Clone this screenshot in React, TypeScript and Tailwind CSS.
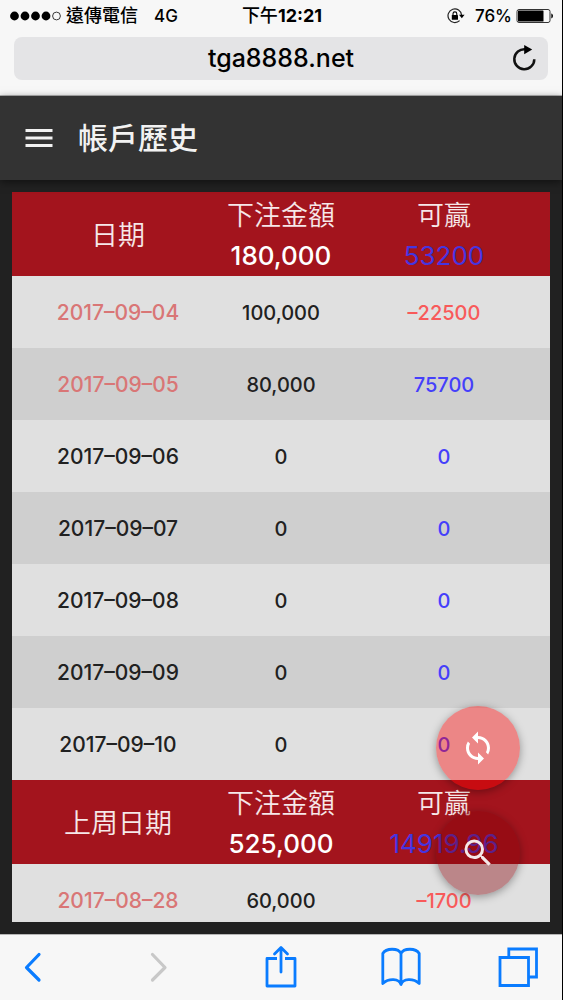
import React from "react";
import { MdLoop, MdMenu, MdSearch } from "react-icons/md";

type Row = { date: string; amount: string; win: string; marked?: boolean };
type Group = { title: string; total: string; win: string; rows: Row[] };

const groups: Group[] = [
  {
    title: "日期",
    total: "180,000",
    win: "53200",
    rows: [
      { date: "2017–09–04", amount: "100,000", win: "–22500", marked: true },
      { date: "2017–09–05", amount: "80,000", win: "75700", marked: true },
      { date: "2017–09–06", amount: "0", win: "0" },
      { date: "2017–09–07", amount: "0", win: "0" },
      { date: "2017–09–08", amount: "0", win: "0" },
      { date: "2017–09–09", amount: "0", win: "0" },
      { date: "2017–09–10", amount: "0", win: "0" },
    ],
  },
  {
    title: "上周日期",
    total: "525,000",
    win: "14919.96",
    rows: [{ date: "2017–08–28", amount: "60,000", win: "–1700", marked: true }],
  },
];

function StatusBar() {
  return (
    <div className="grid h-8 grid-cols-3 items-center pr-2 pl-2.5 text-[17px] leading-8 font-medium">
      <div className="flex items-center whitespace-nowrap">
        <svg className="mr-1 h-3 w-[52px]" viewBox="0 0 52 12" aria-hidden="true">
          <circle cx="4.5" cy="6" r="4.4" />
          <circle cx="15" cy="6" r="4.4" />
          <circle cx="25.5" cy="6" r="4.4" />
          <circle cx="36" cy="6" r="4.4" />
          <circle cx="46.5" cy="6" r="3.9" fill="none" stroke="#222" strokeWidth="0.9" />
        </svg>
        <span className="text-[18px]">遠傳電信</span>
        <span className="ml-4">4G</span>
      </div>
      <div className="text-center text-[18px] whitespace-nowrap">
        下午<span className="font-bold">12:21</span>
      </div>
      <div className="flex items-center justify-end">
        <svg className="mr-2.5 h-4 w-[18px]" viewBox="0 0 18 16" aria-hidden="true">
          <path d="M14.6 7.2A6.8 6.8 0 1 0 12.6 12.6" fill="none" stroke="#222" strokeWidth="1.2" />
          <path d="M12 6.8h5.6l-2.8 3.4z" />
          <rect x="4.8" y="7" width="6.2" height="4.8" rx="0.6" />
          <path d="M6 7.2V5.8a1.9 1.9 0 0 1 3.8 0v1.4" fill="none" stroke="#000" strokeWidth="1.1" />
        </svg>
        <span>76%</span>
        <svg className="ml-1 h-4 w-[38px]" viewBox="0 0 38 16" aria-hidden="true">
          <rect x="1" y="1.5" width="33" height="13" rx="2" fill="none" stroke="#333" strokeWidth="1" />
          <rect x="2" y="2.5" width="25.5" height="11" rx="0.6" />
          <path d="M35.3 5.6c2.2.6 2.2 4.2 0 4.8z" />
        </svg>
      </div>
    </div>
  );
}

function AddressBar() {
  return (
    <div className="mx-3.5 mt-[5px] mb-[15px] flex h-[43px] items-center rounded-lg bg-[#e4e4e6] px-2">
      <span className="w-8" />
      <span className="flex-1 text-center text-[25px] font-medium">tga8888.net</span>
      <button type="button" aria-label="重新載入" className="flex w-8 justify-center">
        <svg className="h-7 w-7" viewBox="0 0 28 28" aria-hidden="true">
          <path d="M24.3 14.2A10 10 0 1 1 15.4 4.300" fill="none" stroke="#111" strokeWidth="2.500" />
          <path d="M14.2 0v9.200l8-4.700z" />
        </svg>
      </button>
    </div>
  );
}

function HistoryTable() {
  return (
    <table className="w-full table-fixed border-collapse text-center">
      <colgroup>
        <col />
        <col className="w-[114px]" />
        <col />
      </colgroup>
      {groups.map((g) => (
        <tbody key={g.title}>
          <tr className="h-[84px] bg-[#a3141d] text-[27px] leading-10 text-white">
            <th scope="col" className="p-0 pt-1 font-[350] text-white/90">{g.title}</th>
            <th scope="col" className="p-0 pt-1 font-[350] whitespace-nowrap">
              <div className="text-white/90">下注金額</div>
              <div className="text-[26px] font-medium">{g.total}</div>
            </th>
            <th scope="col" className="p-0 pt-1 font-[350]">
              <div className="text-white/90">可贏</div>
              <div className="text-[26px] font-normal text-[#4535e0]">{g.win}</div>
            </th>
          </tr>
          {g.rows.map((r) => (
            <tr
              key={r.date}
              className="h-[72px] text-[20px] font-medium text-[#212121] odd:bg-[#cfcfcf] even:bg-[#e0e0e0]"
            >
              <td className={r.marked ? "p-0 pt-0.5 text-[21px] text-[#d97676]" : "p-0 pt-0.5 text-[21px]"}>{r.date}</td>
              <td className="p-0 pt-0.5">{r.amount}</td>
              <td className={r.win.startsWith("–") ? "p-0 pt-0.5 text-[#f85a5a]" : "p-0 pt-0.5 text-[#453ffb]"}>{r.win}</td>
            </tr>
          ))}
        </tbody>
      ))}
    </table>
  );
}

function BrowserToolbar() {
  const line = { fill: "none", stroke: "currentColor" } as const;
  return (
    <nav className="flex h-[66px] shrink-0 items-center justify-between border-t border-[#b5b5b5] bg-[#f7f7f7] px-6 pb-0.5 text-[#0a7cff]">
      <button type="button" aria-label="上一頁" className="flex w-11">
        <svg className="h-8 w-[18px]" viewBox="0 0 18 32" {...line} strokeWidth="3.2" strokeLinecap="round" strokeLinejoin="round">
          <path d="M15 3.5L2.500 16.500l12.500 12.500" />
        </svg>
      </button>
      <button type="button" aria-label="下一頁" className="flex w-11 pl-2 text-[#c8c8c8]">
        <svg className="h-8 w-[18px]" viewBox="0 0 18 32" {...line} strokeWidth="3.2" strokeLinecap="round" strokeLinejoin="round">
          <path d="M2.500 3.500L15 16.500 2.500 29" />
        </svg>
      </button>
      <button type="button" aria-label="分享" className="flex w-11 justify-center">
        <svg className="h-11 w-8" viewBox="0 0 32 44" {...line} strokeWidth="2.8" strokeLinejoin="round">
          <path d="M12 13.500H2V41h28V13.500H20" />
          <path d="M16 27V3M9.500 9L16 2.500 22.500 9" strokeLinecap="round" />
        </svg>
      </button>
      <button type="button" aria-label="書籤" className="flex w-11 justify-end">
        <svg className="h-10 w-10" viewBox="0 0 40 40" {...line} strokeWidth="2.8" strokeLinejoin="round">
          <path d="M20 37.500C18 31.500 8 31 1.800 36.500V6.500C5 .8 17.500.8 20 6.500 22.500.8 35 .8 38.200 6.500v30C32 31 22 31.500 20 37.500zM20 6.500v31" />
        </svg>
      </button>
      <button type="button" aria-label="分頁" className="flex w-11 justify-end">
        <svg className="h-10 w-10" viewBox="0 0 40 40" {...line} strokeWidth="2.8">
          <path d="M2 10.500h28.500v28H2z" />
          <path d="M10.800 10.500V2h27.700v28h-8" />
        </svg>
      </button>
    </nav>
  );
}

export default function App() {
  return (
    <div className="flex h-screen flex-col border-r border-black bg-[#212121] font-['Inter','Noto_Sans_CJK_TC',sans-serif] text-black">
      <div className="shrink-0 border-b border-[#b5b5b5] bg-[#f7f7f7]">
        <StatusBar />
        <AddressBar />
      </div>
      <header className="z-10 flex h-[84px] shrink-0 items-center bg-[#333333] px-[21px] text-[#f2f2f2] shadow-[0_2px_8px_rgba(0,0,0,0.5)]">
        <button type="button" aria-label="選單">
          <MdMenu className="h-9 w-9" />
        </button>
        <h1 className="ml-[21px] text-[30px] leading-10 font-medium">帳戶歷史</h1>
      </header>
      <main className="relative flex min-h-0 flex-1 flex-col p-3">
        <div className="min-h-0 flex-1 overflow-hidden">
          <HistoryTable />
        </div>
        <div className="absolute right-[42px] bottom-[39px] flex flex-col gap-[21px] text-white">
          <button
            type="button"
            aria-label="重新整理"
            className="flex h-[84px] w-[84px] items-center justify-center rounded-full bg-[#ff0000]/40 shadow-[0_2px_8px_rgba(0,0,0,0.35)]"
          >
            <MdLoop className="h-9 w-9" />
          </button>
          <button
            type="button"
            aria-label="搜尋"
            className="flex h-[84px] w-[84px] items-center justify-center rounded-full bg-[#850008]/40 shadow-[0_2px_8px_rgba(0,0,0,0.35)]"
          >
            <MdSearch className="h-9 w-9 text-[#f4e8e8]" />
          </button>
        </div>
      </main>
      <BrowserToolbar />
    </div>
  );
}
